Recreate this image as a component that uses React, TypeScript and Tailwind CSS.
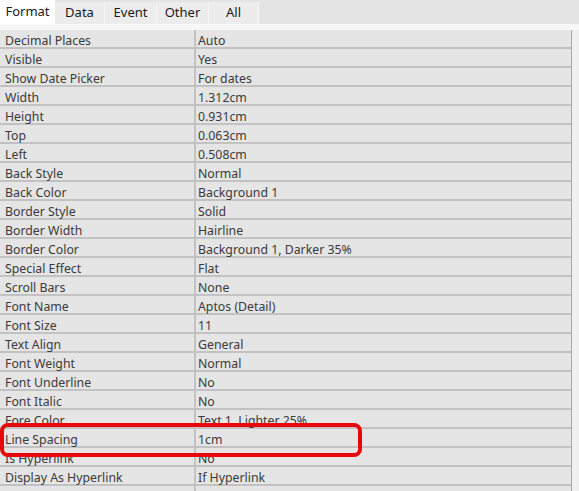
import React from "react";

const rows: [string, string][] = [
  ["Decimal Places", "Auto"],
  ["Visible", "Yes"],
  ["Show Date Picker", "For dates"],
  ["Width", "1.312cm"],
  ["Height", "0.931cm"],
  ["Top", "0.063cm"],
  ["Left", "0.508cm"],
  ["Back Style", "Normal"],
  ["Back Color", "Background 1"],
  ["Border Style", "Solid"],
  ["Border Width", "Hairline"],
  ["Border Color", "Background 1, Darker 35%"],
  ["Special Effect", "Flat"],
  ["Scroll Bars", "None"],
  ["Font Name", "Aptos (Detail)"],
  ["Font Size", "11"],
  ["Text Align", "General"],
  ["Font Weight", "Normal"],
  ["Font Underline", "No"],
  ["Font Italic", "No"],
  ["Fore Color", "Text 1, Lighter 25%"],
  ["Line Spacing", "1cm"],
  ["Is Hyperlink", "No"],
  ["Display As Hyperlink", "If Hyperlink"],
  ["", ""],
];

const tabs = [
  { label: "Format", w: "w-[55px]" },
  { label: "Data", w: "w-[50px]" },
  { label: "Event", w: "w-[52px]" },
  { label: "Other", w: "w-[52px]" },
  { label: "All", w: "w-[50px]" },
];

export default function App() {
  return (
    <div
      className="relative w-[579px] h-[491px] overflow-hidden bg-[#f0f0f0] text-[12.3px] text-[#3a3a3a]"
      style={{ fontFamily: '"Noto Sans", "Open Sans", sans-serif' }}
    >
      <div className="flex h-[24px] bg-[#e4e4e4]">
        {tabs.map((t, i) =>
          i === 0 ? (
            <div
              key={t.label}
              className={`${t.w} h-[24px] bg-white flex items-center justify-center text-[13px] text-[#1a1a1a]`}
            >
              {t.label}
            </div>
          ) : (
            <div
              key={t.label}
              className={`${t.w} h-[22px] mt-[2px] bg-[#ececec] border-r border-[#f6f6f6] flex items-center justify-center text-[13px] text-[#1a1a1a]`}
            >
              {t.label}
            </div>
          )
        )}
      </div>
      <div className="h-[6px] bg-[#f7f7f7]" />
      <div className="w-[572px] border-r border-[#a8a8a8]">
        {rows.map(([k, v], i) => (
          <div
            key={i}
            className="flex h-[19px] bg-[#e5e5e5] border-b-2 border-[#c2c2c2]"
          >
            <div className="w-[196px] h-[17px] border-r-2 border-[#c2c2c2] pl-[5px] leading-[21px] whitespace-nowrap">
              {k}
            </div>
            <div className="flex-1 h-[17px] pl-[2px] leading-[21px] whitespace-nowrap">{v}</div>
          </div>
        ))}
      </div>
      <div className="absolute left-[0px] top-[423px] w-[362px] h-[34px] border-[4px] border-[#e8060a] rounded-[8px]" />
    </div>
  );
}
